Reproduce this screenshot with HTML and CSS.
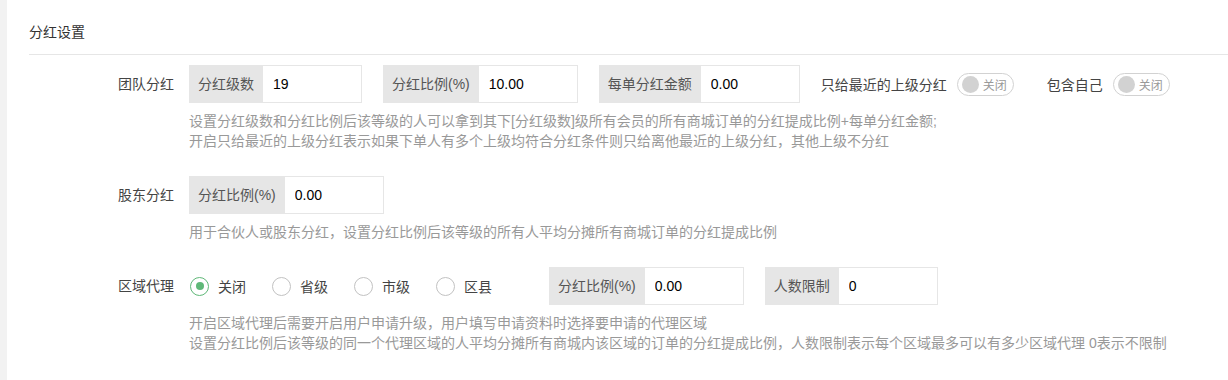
FILE: index.html
```html
<!DOCTYPE html>
<html lang="zh-CN">

<head>
    <meta charset="UTF-8">
    <title>分红设置</title>
    <link rel="stylesheet" href="styles.css">
</head>

<body>
    <div class="page">
        <div class="side"></div>

        <div class="main">
            <div class="card-title">分红设置</div>

            <div class="form">
                <!-- 团队分红 -->
                <div class="form-item">
                    <label class="form-label">团队分红</label>
                    <div class="form-block">
                        <div class="inline-row">
                            <div class="input-group">
                                <span class="addon">分红级数</span>
                                <input class="input" type="text" value="19">
                            </div>
                            <div class="input-group">
                                <span class="addon">分红比例(%)</span>
                                <input class="input" type="text" value="10.00">
                            </div>
                            <div class="input-group">
                                <span class="addon">每单分红金额</span>
                                <input class="input" type="text" value="0.00">
                            </div>
                            <div class="switch-item">
                                <span class="inline-text">只给最近的上级分红</span>
                                <div class="switch"><i></i><em>关闭</em></div>
                            </div>
                            <div class="switch-item">
                                <span class="inline-text">包含自己</span>
                                <div class="switch"><i></i><em>关闭</em></div>
                            </div>
                        </div>
                        <div class="aux">
                            设置分红级数和分红比例后该等级的人可以拿到其下[分红级数]级所有会员的所有商城订单的分红提成比例+每单分红金额;<br>
                            开启只给最近的上级分红表示如果下单人有多个上级均符合分红条件则只给离他最近的上级分红，其他上级不分红
                        </div>
                    </div>
                </div>

                <!-- 股东分红 -->
                <div class="form-item">
                    <label class="form-label">股东分红</label>
                    <div class="form-block">
                        <div class="inline-row">
                            <div class="input-group">
                                <span class="addon">分红比例(%)</span>
                                <input class="input" type="text" value="0.00">
                            </div>
                        </div>
                        <div class="aux">用于合伙人或股东分红，设置分红比例后该等级的所有人平均分摊所有商城订单的分红提成比例</div>
                    </div>
                </div>

                <!-- 区域代理 -->
                <div class="form-item">
                    <label class="form-label">区域代理</label>
                    <div class="form-block">
                        <div class="inline-row">
                            <div class="radios">
                                <span class="radio checked"><i></i>关闭</span>
                                <span class="radio"><i></i>省级</span>
                                <span class="radio"><i></i>市级</span>
                                <span class="radio"><i></i>区县</span>
                            </div>
                            <div class="input-group">
                                <span class="addon">分红比例(%)</span>
                                <input class="input" type="text" value="0.00">
                            </div>
                            <div class="input-group">
                                <span class="addon">人数限制</span>
                                <input class="input" type="text" value="0">
                            </div>
                        </div>
                        <div class="aux">
                            开启区域代理后需要开启用户申请升级，用户填写申请资料时选择要申请的代理区域<br>
                            设置分红比例后该等级的同一个代理区域的人平均分摊所有商城内该区域的订单的分红提成比例，人数限制表示每个区域最多可以有多少区域代理 0表示不限制
                        </div>
                    </div>
                </div>
            </div>
        </div>
    </div>
</body>

</html>
```

FILE: styles.css
```css
body {
    margin: 0;
    font-family: "Liberation Sans", "Noto Sans CJK SC", sans-serif;
    font-size: 14px;
    color: #333;
    background-color: #fff;
}

.page {
    display: flex;
    min-height: 380px;
}

.side {
    width: 7px;
    background-color: #f2f2f2;
}

.main {
    flex: 1;
    padding-left: 22px;
}

.card-title {
    padding: 22px 0 12px;
    line-height: 20px;
    border-bottom: 1px solid #e6e6e6;
    color: #333;
}

.form {
    margin-top: 10px;
}

.form-item {
    display: flex;
    margin-bottom: 25px;
}

.form-label {
    width: 145px;
    padding-right: 15px;
    text-align: right;
    line-height: 38px;
    color: #444;
}

.inline-row {
    display: flex;
    align-items: center;
    height: 38px;
}

.input-group {
    display: flex;
    height: 38px;
    margin-right: 21px;
}

.addon {
    padding: 0 9px;
    line-height: 38px;
    background-color: #e6e6e6;
    color: #555;
    white-space: nowrap;
}

.input {
    box-sizing: border-box;
    width: 99px;
    height: 38px;
    padding: 0 10px;
    border: 1px solid #e6e6e6;
    border-left: none;
    font-family: inherit;
    font-size: 14px;
    color: #000;
    outline: none;
}

.switch-item {
    display: flex;
    align-items: center;
    margin-right: 33px;
}

.switch-item:first-of-type {
    margin-left: -1px;
}

.inline-text {
    color: #444;
    margin-right: 10px;
}

.switch {
    display: flex;
    align-items: center;
    box-sizing: border-box;
    width: 57px;
    height: 23px;
    padding-left: 4px;
    border: 1px solid #d2d2d2;
    border-radius: 20px;
}

.switch i {
    width: 17px;
    height: 17px;
    border-radius: 50%;
    background-color: #d2d2d2;
}

.switch em {
    font-style: normal;
    font-size: 12px;
    color: #999;
    margin-left: 4px;
}

.radios {
    display: flex;
    align-items: center;
    margin-right: 57px;
}

.radio {
    display: flex;
    align-items: center;
    color: #444;
    margin-right: 25px;
}

.radio:last-child {
    margin-right: 0;
}

.radio i {
    box-sizing: border-box;
    width: 19px;
    height: 19px;
    margin-left: 1px;
    margin-right: 9px;
    border: 1.5px solid #c2c2c2;
    border-radius: 50%;
    display: flex;
    align-items: center;
    justify-content: center;
}

.radio.checked i {
    border-color: #5fb878;
}

.radio.checked i::after {
    content: "";
    width: 8px;
    height: 8px;
    border-radius: 50%;
    background-color: #5fb878;
}

.aux {
    margin-top: 8px;
    line-height: 20px;
    color: #999;
    white-space: nowrap;
}
```
